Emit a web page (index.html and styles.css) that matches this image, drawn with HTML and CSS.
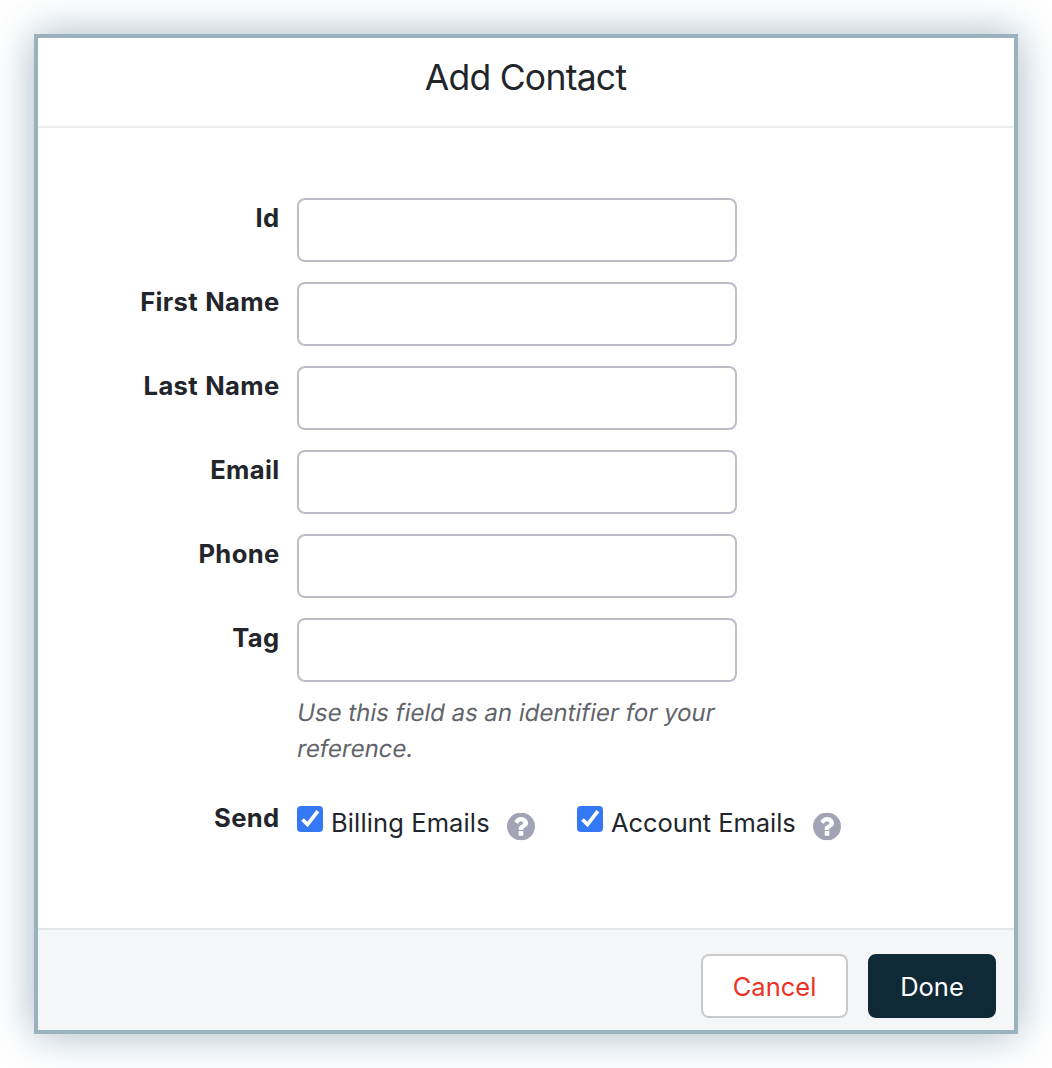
FILE: index.html
```html
<!DOCTYPE html>
<html lang="en">
<head>
<meta charset="utf-8">
<title>Add Contact</title>
<link rel="stylesheet" href="styles.css">
</head>
<body>
<svg width="0" height="0" class="sprites">
  <symbol id="icon-help" viewBox="0 128 1536 1536"><path d="M896 1376v-192q0-14-9-23t-23-9h-192q-14 0-23 9t-9 23v192q0 14 9 23t23 9h192q14 0 23-9t9-23zm256-672q0-88-55.500-163t-138.500-116-170-41q-243 0-371 213-15 24 8 42l132 100q7 6 19 6 16 0 25-12 53-68 86-92 34-24 86-24 48 0 85.500 26t37.500 59q0 38-20 61t-68 45q-63 28-115.500 86.500t-52.500 125.500v36q0 14 9 23t23 9h192q14 0 23-9t9-23q0-19 21.500-49.500t54.500-49.500q32-18 49-28.500t46-35 44.500-48 28-60.500 12.500-81zm384 192q0 209-103 385.500t-279.500 279.500-385.500 103-385.500-103-279.500-279.500-103-385.500 103-385.500 279.500-279.500 385.500-103 385.500 103 279.500 279.500 103 385.500z"/></symbol>
</svg>
<form class="dialog" role="dialog" aria-labelledby="title">
  <header class="dialog-header"><h1 class="title" id="title">Add Contact</h1></header>
  <main class="dialog-body">
    <div class="row"><label class="label" for="id">Id</label><input class="input" id="id"></div>
    <div class="row"><label class="label" for="first">First Name</label><input class="input" id="first"></div>
    <div class="row"><label class="label" for="last">Last Name</label><input class="input" id="last"></div>
    <div class="row"><label class="label" for="email">Email</label><input class="input" id="email"></div>
    <div class="row"><label class="label" for="phone">Phone</label><input class="input" id="phone"></div>
    <div class="row"><label class="label" for="tag">Tag</label>
      <div class="field"><input class="input" id="tag"><p class="hint"><span class="hint-line">Use this field as an identifier for your</span> <span class="hint-line">reference.</span></p></div>
    </div>
    <div class="row row-send"><span class="label">Send</span>
      <div class="options">
        <label class="option option-billing">
          <input class="check-input" type="checkbox" checked>
          <svg class="check" viewBox="0 0 26 26"><rect width="26" height="26" rx="4"/><path d="M5.500 13.500 10.500 18.400 20.900 5.200"/></svg>
          <span class="option-text">Billing Emails</span>
          <svg class="help"><use href="#icon-help"/></svg>
        </label>
        <label class="option option-account">
          <input class="check-input" type="checkbox" checked>
          <svg class="check" viewBox="0 0 26 26"><rect width="26" height="26" rx="4"/><path d="M5.500 13.500 10.500 18.400 20.900 5.200"/></svg>
          <span class="option-text">Account Emails</span>
          <svg class="help"><use href="#icon-help"/></svg>
        </label>
      </div>
    </div>
  </main>
  <footer class="dialog-footer">
    <button class="button cancel" type="button">Cancel</button>
    <button class="button done" type="button">Done</button>
  </footer>
</form>
</body>
</html>
```
FILE: styles.css
```css
* { box-sizing: border-box; }
body {
  margin: 0;
  padding: 34px;
  height: 1068px;
  overflow: hidden;
  background: #fff;
  color: #22262b;
  font-family: Inter, "Liberation Sans", sans-serif;
  font-size: 26px;
}
.sprites { display: none; }
.dialog {
  display: flex;
  flex-direction: column;
  width: 984px;
  height: 1000px;
  border: 4px solid #9ab1be;
  background: #fff;
  box-shadow: 0 0 40px rgba(30, 78, 110, .4);
}
.dialog-header {
  height: 90px;
  border-bottom: 2px solid #ececec;
  text-align: center;
}
.title {
  margin: 0;
  padding-right: 1px;
  font-size: 35.5px;
  font-weight: 400;
  line-height: 80px;
  letter-spacing: -.75px;
}
.dialog-body {
  flex: 1;
  display: flex;
  flex-direction: column;
  gap: 20px;
  padding-top: 70px;
}
.row {
  display: grid;
  grid-template-columns: 241.6px 1fr;
  column-gap: 17.4px;
}
.label {
  text-align: right;
  font-size: 25.6px;
  font-weight: 700;
  line-height: 40px;
  letter-spacing: .35px;
  word-spacing: .8px;
}
.input {
  display: block;
  width: 440px;
  height: 64px;
  margin: 0;
  padding: 0 16px;
  border: 2px solid #bdbcc7;
  border-radius: 8px;
  outline: none;
  background: #fff;
  font: inherit;
}
.hint {
  margin: 13px 0 -1px;
  color: #626469;
  font-size: 24px;
  line-height: 36px;
}
/* slanted upright letterforms */
.hint-line {
  display: block;
  white-space: nowrap;
  transform: translateX(.4px) skewX(-10deg);
}
.row-send { margin-top: 12px; }
.options { display: flex; gap: 42px; }
.option {
  display: flex;
  align-items: flex-start;
  height: 52px;
}
.check-input {
  appearance: none;
  width: 0;
  height: 0;
  margin: 0;
}
.check {
  flex: none;
  width: 26px;
  height: 26px;
  margin: 8px 8px 0 0;
  fill: #3478f6;
}
.check path { fill: none; stroke: #fff; stroke-width: 3.7; }
.option-text {
  font-size: 25.5px;
  line-height: 50px;
  white-space: nowrap;
}
.option-billing .option-text { width: 176px; letter-spacing: .12px; }
.option-account .option-text { width: 202px; letter-spacing: -.05px; }
.help {
  flex: none;
  width: 28px;
  height: 28px;
  margin-top: 14px;
  fill: #a2a3b5;
  transform: translateY(.4px);
}
.dialog-footer {
  display: flex;
  justify-content: flex-end;
  gap: 20px;
  height: 102px;
  padding: 24px 18px 0 0;
  border-top: 2px solid #e1e7ea;
  background: #f4f6f8;
}
.button {
  height: 64px;
  padding: 2px 0 0;
  border-radius: 8px;
  font-family: inherit;
  font-size: 25.5px;
  line-height: 58px;
}
.cancel {
  width: 147px;
  border: 2px solid #c9c9c9;
  background: #fff;
  color: #ee3124;
}
.done {
  width: 128px;
  border: 2px solid #0f2937;
  background: #0f2937;
  color: #fff;
}
```
